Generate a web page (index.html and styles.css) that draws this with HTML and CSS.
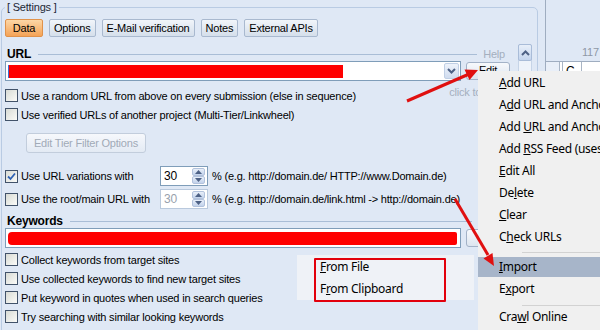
FILE: index.html
```html
<!DOCTYPE html>
<html lang="en">
<head>
    <meta charset="UTF-8">
    <meta name="viewport" content="width=device-width, initial-scale=1.0">
    <title>Project - Data</title>
    <link rel="stylesheet" href="styles.css">
</head>
<body>
    <div class="window">
        <div class="main">
            <fieldset class="group">
                <legend>[ Settings ]</legend>
                <div class="tabs">
                    <span class="tab active">Data</span>
                    <span class="tab">Options</span>
                    <span class="tab">E-Mail verification</span>
                    <span class="tab">Notes</span>
                    <span class="tab">External APIs</span>
                </div>

                <div class="content">
                    <div class="form">
                        <!-- URL -->
                        <div class="section-head">
                            <span class="title">URL</span>
                            <span class="rule"></span>
                            <span class="help">Help</span>
                        </div>
                        <div class="combo-row">
                            <div class="combo">
                                <span class="redact url"></span>
                                <span class="drop">
                                    <svg width="11" height="8" viewBox="0 0 11 8"><path d="M2 2 L5.5 5.5 L9 2" fill="none" stroke="#4d6185" stroke-width="2"/></svg>
                                </span>
                            </div>
                            <span class="btn-edit">Edit</span>
                        </div>
                        <div class="check-row first">
                            <span class="box"></span>
                            <span>Use a random URL from above on every submission (else in sequence)</span>
                            <span class="hint">click to edit</span>
                        </div>
                        <div class="check-row">
                            <span class="box"></span>
                            <span>Use verified URLs of another project (Multi-Tier/Linkwheel)</span>
                        </div>
                        <div class="btn-tier">Edit Tier Filter Options</div>

                        <div class="spin-row">
                            <span class="spin-label">
                                <span class="box checked">
                                    <svg width="11" height="11" viewBox="0 0 11 11"><path d="M2 5.5 L4.5 8 L9 2.5" fill="none" stroke="#2f62b3" stroke-width="1.8"/></svg>
                                </span>
                                <span>Use URL variations with</span>
                            </span>
                            <span class="spin">
                                <span class="spin-val">30</span>
                                <span class="spin-btns">
                                    <span><svg width="7" height="4" viewBox="0 0 7 4"><path d="M0 4 L3.5 0 L7 4 Z" fill="#4d6185"/></svg></span>
                                    <span><svg width="7" height="4" viewBox="0 0 7 4"><path d="M0 0 L3.5 4 L7 0 Z" fill="#4d6185"/></svg></span>
                                </span>
                            </span>
                            <span class="unit">% (e.g. http://domain.de/ HTTP://www.Domain.de)</span>
                        </div>
                        <div class="spin-row">
                            <span class="spin-label">
                                <span class="box"></span>
                                <span>Use the root/main URL with</span>
                            </span>
                            <span class="spin disabled">
                                <span class="spin-val">30</span>
                                <span class="spin-btns">
                                    <span><svg width="7" height="4" viewBox="0 0 7 4"><path d="M0 4 L3.5 0 L7 4 Z" fill="#4d6185"/></svg></span>
                                    <span><svg width="7" height="4" viewBox="0 0 7 4"><path d="M0 0 L3.5 4 L7 0 Z" fill="#4d6185"/></svg></span>
                                </span>
                            </span>
                            <span class="unit">% (e.g. http://domain.de/link.html -&gt; http://domain.de)</span>
                        </div>

                        <!-- Keywords -->
                        <div class="section-head kw">
                            <span class="title">Keywords</span>
                            <span class="rule"></span>
                            <span class="help blank"></span>
                        </div>
                        <div class="combo-row">
                            <div class="combo">
                                <span class="redact kw"></span>
                            </div>
                            <span class="btn-edit"></span>
                        </div>
                        <div class="check-row first-kw">
                            <span class="box"></span>
                            <span>Collect keywords from target sites</span>
                        </div>
                        <div class="check-row">
                            <span class="box"></span>
                            <span>Use collected keywords to find new target sites</span>
                        </div>
                        <div class="check-row">
                            <span class="box"></span>
                            <span>Put keyword in quotes when used in search queries</span>
                        </div>
                        <div class="check-row">
                            <span class="box"></span>
                            <span>Try searching with similar looking keywords</span>
                        </div>
                    </div>
                    <div class="vscroll">
                        <span class="vscroll-up">
                            <svg width="9" height="6" viewBox="0 0 9 6"><path d="M1 5 L4.5 1.5 L8 5" fill="none" stroke="#4d6185" stroke-width="2"/></svg>
                        </span>
                    </div>
                </div>
            </fieldset>
        </div>

        <div class="side">
            <div class="side-top"><span>117</span></div>
            <div class="side-row">
                <span class="cell c1"></span>
                <span class="cell c2"></span>
                <span class="cell c3">C</span>
                <span class="cell c4"></span>
            </div>
        </div>
    </div>

    <div class="submenu">
        <div class="menu-item"><u>F</u>rom File</div>
        <div class="menu-item">F<u>r</u>om Clipboard</div>
    </div>
    <div class="annot-box"></div>

    <div class="menu">
        <div class="menu-item"><u>A</u>dd URL</div>
        <div class="menu-item">A<u>d</u>d URL and Anchor</div>
        <div class="menu-item">Add <u>U</u>RL and Anchor</div>
        <div class="menu-item">Add <u>R</u>SS Feed (uses</div>
        <div class="menu-item"><u>E</u>dit All</div>
        <div class="menu-item">De<u>l</u>ete</div>
        <div class="menu-item"><u>C</u>lear</div>
        <div class="menu-item">C<u>h</u>eck URLs</div>
        <div class="menu-sep"><span></span></div>
        <div class="menu-item hot"><u>I</u>mport</div>
        <div class="menu-item">E<u>x</u>port</div>
        <div class="menu-sep low"><span></span></div>
        <div class="menu-item">Cra<u>w</u>l Online</div>
    </div>

    <svg class="arrows" width="600" height="330" viewBox="0 0 600 330">
        <line x1="407" y1="101" x2="468" y2="74.5" stroke="#e01010" stroke-width="3"/>
        <polygon points="478,70 469.5,80 464.5,69.5" fill="#e01010"/>
        <line x1="455" y1="199" x2="488" y2="255" stroke="#e01010" stroke-width="3"/>
        <polygon points="494,266 483.5,258.5 492.5,253" fill="#e01010"/>
    </svg>
</body>
</html>
```

FILE: styles.css
```css
* {
    margin: 0;
    padding: 0;
    box-sizing: border-box;
}

body {
    width: 600px;
    height: 330px;
    overflow: hidden;
    position: relative;
    background: #dfe8f5;
    font-family: "Liberation Sans", Arial, sans-serif;
    font-size: 11px;
    letter-spacing: -0.2px;
    color: #000;
}

.window {
    display: flex;
    height: 330px;
    overflow: hidden;
}

.main {
    width: 545px;
    height: 330px;
    flex: none;
    overflow: hidden;
}

.group {
    margin-left: 1px;
    width: 537px;
    height: 360px;
    border: 1px solid #b9cbe3;
    border-radius: 5px;
    padding: 0 5px 0 3px;
}

.group legend {
    padding: 0 2px;
    line-height: 14px;
    color: #1d2735;
}

/* tabs */
.tabs {
    display: flex;
    gap: 6px;
    margin-top: 5px;
}

.tab {
    height: 18px;
    line-height: 16px;
    padding: 0 4px;
    border: 1px solid #a9b9cf;
    border-radius: 2px;
    background: linear-gradient(#f1f5fa, #d5dfeb);
}

.tab.active {
    min-width: 38px;
    text-align: center;
    background: linear-gradient(#fdd7a6, #f5a357);
    border-color: #e0924b;
}

.content {
    display: flex;
    margin-top: 7px;
}

.form {
    flex: 1;
}

.vscroll {
    width: 14px;
    height: 270px;
    margin-left: 8px;
    background: #eef3fa;
    border: 1px solid #c6d4e7;
    border-radius: 2px;
}

.vscroll-up {
    display: flex;
    align-items: center;
    justify-content: center;
    height: 17px;
    margin: -1px;
    background: linear-gradient(#e8eff9, #c4d5ee);
    border: 1px solid #a9bcd8;
    border-radius: 2px;
}

/* section headings */
.section-head {
    display: flex;
    align-items: center;
    height: 14px;
    margin-top: 3px;
    padding-left: 2px;
}

.section-head.kw {
    margin-top: 5px;
}

.title {
    font-weight: bold;
    font-size: 12px;
}

.rule {
    flex: 1;
    border-top: 1px solid #a9bdd6;
    margin: 1px 6px 0 7px;
}

.help {
    color: #a4afbe;
    padding-right: 5px;
}

.help.blank {
    width: 32px;
}

/* combo + edit button */
.combo-row {
    display: flex;
    align-items: flex-start;
    height: 20px;
}

.combo {
    width: 456px;
    height: 20px;
    display: flex;
    align-items: center;
    padding: 0 1px 0 2px;
    background: #fff;
    border: 1px solid #7f9db9;
}

.redact {
    height: 13px;
    background: #ff0000;
}

.redact.url {
    width: 335px;
    border-left: 1px solid #3d6fd2;
}

.redact.kw {
    width: 449px;
    border-radius: 4px 2px 2px 4px;
}

.drop {
    margin-left: auto;
    width: 15px;
    height: 16px;
    display: flex;
    align-items: center;
    justify-content: center;
    background: linear-gradient(#eef3fb, #d0dcef);
    border: 1px solid #c0cfe5;
    border-radius: 2px;
}

.btn-edit {
    width: 44px;
    height: 18px;
    margin: 1px 0 0 5px;
    padding-top: 1px;
    line-height: 12px;
    text-align: center;
    background: linear-gradient(#f7f9fc, #dde5ef);
    border: 1px solid #a3b2c7;
    border-radius: 3px;
}

/* checkbox rows */
.check-row {
    display: flex;
    align-items: center;
    height: 19px;
}

.check-row.first {
    margin-top: 5px;
}

.check-row.first-kw {
    margin-top: 2px;
}

.box {
    width: 13px;
    height: 13px;
    flex: none;
    margin-right: 3px;
    display: flex;
    align-items: center;
    justify-content: center;
    border: 1px solid #42536a;
    background: linear-gradient(135deg, #d8dbd5, #fbfbf8);
}

.hint {
    margin-left: auto;
    margin-right: 9px;
    align-self: flex-start;
    line-height: 12px;
    color: #a4afbe;
}

.btn-tier {
    width: 120px;
    height: 20px;
    margin: 9px 0 0 21px;
    line-height: 18px;
    text-align: center;
    color: #a1aab7;
    background: linear-gradient(#f6f8fc, #e3eaf4);
    border: 1px solid #c2cddc;
    border-radius: 3px;
}

/* spinner rows */
.spin-row {
    display: flex;
    align-items: center;
    height: 20px;
    margin-top: 13px;
}

.spin-row + .spin-row {
    margin-top: 3px;
}

.spin-label {
    width: 155px;
    display: flex;
    align-items: center;
}

.spin {
    width: 48px;
    height: 20px;
    display: flex;
    align-items: center;
    padding: 0 2px 0 3px;
    background: #fff;
    border: 1px solid #7f9db9;
}

.spin.disabled {
    border-color: #b9c9dd;
    color: #98a1ad;
}

.spin-val {
    flex: 1;
    font-size: 12px;
}

.spin-btns {
    width: 13px;
    height: 16px;
    display: flex;
    flex-direction: column;
}

.spin-btns span {
    flex: 1;
    display: flex;
    align-items: center;
    justify-content: center;
    background: linear-gradient(#e8eff9, #c2d2eb);
    border: 1px solid #b2c2dc;
    border-radius: 2px;
}

.unit {
    margin-left: 4px;
}

/* right hand grid piece */
.side {
    flex: 1;
    border-left: 1px solid #9fadc0;
}

.side-top {
    height: 62px;
    padding: 0 0 3px 36px;
    display: flex;
    align-items: flex-end;
    justify-content: flex-start;
    color: #8e98a6;
    border-bottom: 1px solid #9fadc0;
}

.side-row {
    display: flex;
    height: 60px;
}

.cell {
    border-right: 1px solid #a9b5c5;
}

.c1 { width: 14px; background: #e9eff8; }
.c2 { width: 3px; background: #fff; }
.c3 { width: 19px; background: #fff; padding: 2px 0 0 3px; font-size: 12px; }
.c4 { flex: 1; background: #fff; border-right: none; }

/* popup menus */
.menu,
.submenu {
    position: absolute;
    font-family: "Noto Sans", sans-serif;
    font-size: 12px;
    letter-spacing: -0.3px;
    white-space: nowrap;
}

.menu {
    left: 478px;
    top: 71px;
    width: 122px;
    height: 259px;
    padding-top: 1px;
    background: #f0f0f0;
    overflow: hidden;
}

.menu-item {
    height: 22px;
    line-height: 22px;
    padding-left: 21px;
}

.menu-item.hot {
    background: #a7b5c9;
    box-shadow: inset 0 1px #f0f0f0, inset 0 -1px #f0f0f0;
}

.menu-sep {
    height: 8px;
    padding: 4px 0 0 44px;
}

.menu-sep.low {
    height: 6px;
    padding-top: 5px;
}

.menu-sep span {
    display: block;
    border-top: 1px solid #d2d2d2;
}

.submenu {
    left: 297px;
    top: 255px;
    width: 177px;
    height: 45px;
    padding-top: 1px;
    background: #eff2f7;
}

.submenu .menu-item {
    padding-left: 23px;
}

.annot-box {
    position: absolute;
    left: 314px;
    top: 258px;
    width: 132px;
    height: 44px;
    border: 2px solid #e2000c;
    border-radius: 1px;
}

.arrows {
    position: absolute;
    left: 0;
    top: 0;
    pointer-events: none;
}
```
